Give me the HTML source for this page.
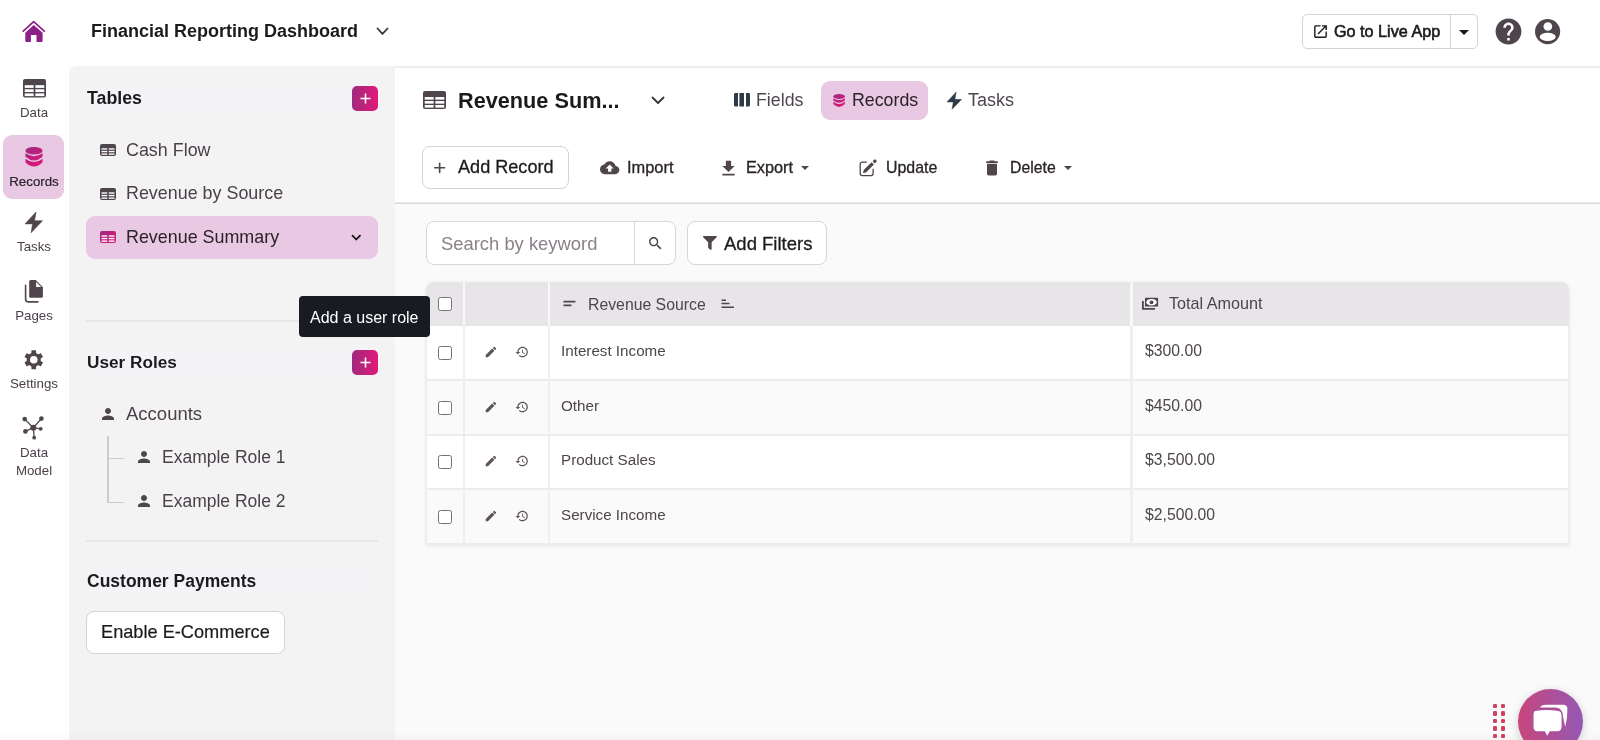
<!DOCTYPE html>
<html><head><meta charset="utf-8"><title>Financial Reporting Dashboard</title>
<style>
html,body{margin:0;padding:0;}
body{width:1600px;height:740px;position:relative;overflow:hidden;background:#fff;font-family:"Liberation Sans",sans-serif;-webkit-font-smoothing:antialiased;}
.t{position:absolute;white-space:nowrap;will-change:transform;}
.b{position:absolute;}
svg.b{overflow:visible;}
</style></head><body>
<div class="b" style="left:69px;top:66px;width:326px;height:674px;background:#f3f3f3;border-top-left-radius:8px;"></div>
<div class="b" style="left:395px;top:67px;width:1205px;height:136px;background:#ffffff;"></div>
<div class="b" style="left:395px;top:66px;width:1205px;height:2px;background:#ededed;"></div>
<div class="b" style="left:395px;top:202px;width:1205px;height:1px;background:#eceaec;"></div>
<div class="b" style="left:395px;top:203px;width:1205px;height:1px;background:#d9d5d9;"></div>
<div class="b" style="left:395px;top:204px;width:1205px;height:536px;background:#fafafa;"></div>
<svg class="b" style="left:16px;top:14px;" width="36" height="34" viewBox="0 0 36 34" ><path d="M7.2 17.2 L17.7 7.6 L28.2 17.2" fill="none" stroke="#8e1f88" stroke-width="1.7" stroke-linecap="round" stroke-linejoin="round"/><path d="M9.3 18.8 L17.7 11.1 L26.6 18.8 V26.7 Q26.6 27.9 25.4 27.9 H20.5 V21.3 Q20.5 20.9 20.1 20.9 H15.3 Q14.9 20.9 14.9 21.3 V27.9 H10.5 Q9.3 27.9 9.3 26.7 Z" fill="#8e1f88"/></svg>
<div class="t" style="left:91.00px;top:22px;font-size:18px;line-height:18px;color:#1d1a1d;font-weight:700;">Financial Reporting Dashboard</div>
<svg class="b" style="left:376px;top:27px;" width="13" height="9" viewBox="0 0 13 9" ><path d="M1.5 1.5 L6.5 6.8 L11.5 1.5" fill="none" stroke="#3a3439" stroke-width="1.8" stroke-linecap="round" stroke-linejoin="round"/></svg>
<div class="b" style="left:1302px;top:14px;width:176px;height:35px;box-sizing:border-box;border:1px solid #d6d3d6;border-radius:5px;background:#fff;"></div>
<div class="b" style="left:1450px;top:15px;width:1px;height:33px;background:#d6d3d6;"></div>
<svg class="b" style="left:1312px;top:22.8px;" width="17" height="17" viewBox="0 0 24 24" ><path fill="#1d1a1d" d="M19 19H5V5h7V3H5c-1.11 0-2 .9-2 2v14c0 1.1.89 2 2 2h14c1.1 0 2-.9 2-2v-7h-2zM14 3v2h3.59l-9.83 9.83 1.41 1.41L19 6.41V10h2V3z"/></svg>
<div class="t" style="left:1334.00px;top:23px;font-size:16.2px;line-height:16px;color:#1d1a1d;font-weight:400;-webkit-text-stroke:0.6px #1d1a1d;">Go to Live App</div>
<svg class="b" style="left:1459px;top:29.5px;" width="10" height="5" viewBox="0 0 10 5" ><path d="M0 0 H10 L5 5 Z" fill="#1d1a1d"/></svg>
<svg class="b" style="left:1493px;top:16px;" width="31" height="31" viewBox="0 0 24 24" ><path fill="#4f454d" d="M12 2C6.48 2 2 6.48 2 12s4.48 10 10 10 10-4.48 10-10S17.52 2 12 2m1 17h-2v-2h2zm2.07-7.75-.9.92C13.45 12.9 13 13.5 13 15h-2v-.5c0-1.1.45-2.1 1.17-2.83l1.24-1.26c.37-.36.59-.86.59-1.41 0-1.1-.9-2-2-2s-2 .9-2 2H8c0-2.21 1.79-4 4-4s4 1.79 4 4c0 .88-.36 1.68-.93 2.25"/></svg>
<svg class="b" style="left:1535px;top:19px;" width="25.2" height="25.2" viewBox="0 0 25.2 25.2" ><circle cx="12.6" cy="12.6" r="12.6" fill="#4f454d"/><circle cx="12.85" cy="7.5" r="4.35" fill="#fff"/><ellipse cx="12.7" cy="17.9" rx="8" ry="4.2" fill="#fff"/></svg>
<svg class="b" style="left:22.5px;top:79px;" width="23" height="18.5" viewBox="0 0 23 18.5" ><rect x="0" y="0" width="23" height="18.5" rx="2" fill="#4f454d"/><rect x="1.72" y="6.19" width="8.91" height="2.72" fill="#fff"/><rect x="12.36" y="6.19" width="8.91" height="2.72" fill="#fff"/><rect x="1.72" y="10.29" width="8.91" height="2.72" fill="#fff"/><rect x="12.36" y="10.29" width="8.91" height="2.72" fill="#fff"/><rect x="1.72" y="14.40" width="8.91" height="2.72" fill="#fff"/><rect x="12.36" y="14.40" width="8.91" height="2.72" fill="#fff"/></svg>
<div class="t" style="left:-66.30px;width:200px;text-align:center;top:106px;font-size:13.3px;line-height:13px;color:#4b404a;font-weight:400;">Data</div>
<div class="b" style="left:3px;top:135px;width:61px;height:63.5px;background:#e8c8e2;border-radius:9px;"></div>
<svg class="b" style="left:24.6px;top:146.6px;" width="18" height="19.7" viewBox="0 0 12.2 12.8" preserveAspectRatio="none"><defs><linearGradient id="gdb" gradientUnits="userSpaceOnUse" x1="0" y1="0" x2="8" y2="13"><stop offset="0" stop-color="#9a2a7f"/><stop offset="1" stop-color="#e0187a"/></linearGradient></defs><ellipse cx="6.1" cy="2.45" rx="5.8" ry="2.45" fill="url(#gdb)"/><path fill="url(#gdb)" d="M0.3 4.1 Q6.1 7.8 11.9 4.1 V6.3 Q6.1 11.1 0.3 6.3 Z M0.3 7.6 Q6.1 12.0 11.9 7.6 V9.9 Q6.1 15.5 0.3 9.9 Z"/></svg>
<div class="t" style="left:-66.40px;width:200px;text-align:center;top:175px;font-size:13.3px;line-height:13px;color:#2a2329;font-weight:400;-webkit-text-stroke:0.2px #2a2329;">Records</div>
<svg class="b" style="left:25.1px;top:212.3px;" width="17.5" height="20.7" viewBox="0 0 17.5 20.7" ><path fill="#4f454d" stroke="#4f454d" stroke-width="0.6" stroke-linejoin="round" d="M11.1 0 L0 11.9 L7.6 11.9 L6.1 20.7 L17.5 8.8 L9.5 8.75 Z"/></svg>
<div class="t" style="left:-66.20px;width:200px;text-align:center;top:240px;font-size:13.3px;line-height:13px;color:#4b404a;font-weight:400;">Tasks</div>
<svg class="b" style="left:20px;top:276px;" width="28" height="30" viewBox="0 0 28 30" ><path fill="#4f454d" d="M10.7 4 H15.6 L22.9 11.3 V20.3 Q22.9 21.8 21.4 21.8 H10.7 Q9.2 21.8 9.2 20.3 V5.5 Q9.2 4 10.7 4 Z"/><path fill="#fff" d="M16.1 5.9 V11 H21.2 Z"/><path d="M5.6 9.3 V22.9 Q5.6 25.9 8.6 25.9 H17.9" fill="none" stroke="#4f454d" stroke-width="1.6" stroke-linecap="round"/></svg>
<div class="t" style="left:-66.50px;width:200px;text-align:center;top:309px;font-size:13.3px;line-height:13px;color:#4b404a;font-weight:400;">Pages</div>
<svg class="b" style="left:24px;top:349.5px;" width="19.5" height="19.5" viewBox="0 0 20 20" ><rect x="7.6" y="0.3" width="4.8" height="5" rx="0.5" transform="rotate(0 10 10)" fill="#4f454d"/><rect x="7.6" y="0.3" width="4.8" height="5" rx="0.5" transform="rotate(60 10 10)" fill="#4f454d"/><rect x="7.6" y="0.3" width="4.8" height="5" rx="0.5" transform="rotate(120 10 10)" fill="#4f454d"/><rect x="7.6" y="0.3" width="4.8" height="5" rx="0.5" transform="rotate(180 10 10)" fill="#4f454d"/><rect x="7.6" y="0.3" width="4.8" height="5" rx="0.5" transform="rotate(240 10 10)" fill="#4f454d"/><rect x="7.6" y="0.3" width="4.8" height="5" rx="0.5" transform="rotate(300 10 10)" fill="#4f454d"/><circle cx="10" cy="10" r="7.3" fill="#4f454d"/><circle cx="10" cy="10" r="3.9" fill="#fff"/></svg>
<div class="t" style="left:-66.40px;width:200px;text-align:center;top:377px;font-size:13.3px;line-height:13px;color:#4b404a;font-weight:400;">Settings</div>
<svg class="b" style="left:22px;top:416px;" width="22" height="24" viewBox="0 0 22 24" ><g stroke="#4f454d" stroke-width="1.3"><line x1="11.3" y1="11.7" x2="2.7" y2="3.1"/><line x1="11.3" y1="11.7" x2="19.4" y2="2.6"/><line x1="11.3" y1="11.7" x2="3.4" y2="15.4"/><line x1="11.3" y1="11.7" x2="18.7" y2="12.8"/><line x1="11.3" y1="11.7" x2="12.2" y2="21.7"/></g><g fill="#4f454d"><circle cx="11.3" cy="11.7" r="3"/><circle cx="2.7" cy="3.1" r="2.3"/><circle cx="19.4" cy="2.6" r="2.3"/><circle cx="3.4" cy="15.4" r="2.3"/><circle cx="18.7" cy="12.8" r="1.9"/><circle cx="12.2" cy="21.7" r="1.9"/></g></svg>
<div class="t" style="left:-66.40px;width:200px;text-align:center;top:446px;font-size:13.3px;line-height:13px;color:#4b404a;font-weight:400;">Data</div>
<div class="t" style="left:-66.40px;width:200px;text-align:center;top:464px;font-size:13.3px;line-height:13px;color:#4b404a;font-weight:400;">Model</div>
<div class="b" style="left:86px;top:84px;width:292px;height:26.5px;background:#f4f4f6;"></div>
<div class="t" style="left:87.00px;top:89px;font-size:17.8px;line-height:18px;color:#1d1a1d;font-weight:700;">Tables</div>
<div class="b" style="left:352px;top:85.5px;width:26px;height:25px;background:linear-gradient(90deg,#a02b7d,#e2187a);border-radius:5px;"></div>
<svg class="b" style="left:358.5px;top:91.5px;" width="13" height="13" viewBox="0 0 13 13" ><path d="M6.5 1.5 V11.5 M1.5 6.5 H11.5" stroke="#fff" stroke-width="1.6"/></svg>
<svg class="b" style="left:100px;top:144.2px;" width="16" height="12" viewBox="0 0 16 12" ><rect x="0" y="0" width="16" height="12" rx="2" fill="#4f454d"/><rect x="1.50" y="4.32" width="5.75" height="1.36" fill="#fff"/><rect x="8.75" y="4.32" width="5.75" height="1.36" fill="#fff"/><rect x="1.50" y="6.88" width="5.75" height="1.36" fill="#fff"/><rect x="8.75" y="6.88" width="5.75" height="1.36" fill="#fff"/><rect x="1.50" y="9.44" width="5.75" height="1.36" fill="#fff"/><rect x="8.75" y="9.44" width="5.75" height="1.36" fill="#fff"/></svg>
<div class="t" style="left:126.00px;top:141px;font-size:17.9px;line-height:18px;color:#4b404a;font-weight:400;">Cash Flow</div>
<svg class="b" style="left:100px;top:187.5px;" width="16" height="12" viewBox="0 0 16 12" ><rect x="0" y="0" width="16" height="12" rx="2" fill="#4f454d"/><rect x="1.50" y="4.32" width="5.75" height="1.36" fill="#fff"/><rect x="8.75" y="4.32" width="5.75" height="1.36" fill="#fff"/><rect x="1.50" y="6.88" width="5.75" height="1.36" fill="#fff"/><rect x="8.75" y="6.88" width="5.75" height="1.36" fill="#fff"/><rect x="1.50" y="9.44" width="5.75" height="1.36" fill="#fff"/><rect x="8.75" y="9.44" width="5.75" height="1.36" fill="#fff"/></svg>
<div class="t" style="left:126.00px;top:184px;font-size:17.9px;line-height:18px;color:#4b404a;font-weight:400;">Revenue by Source</div>
<div class="b" style="left:86px;top:216px;width:292px;height:43.2px;background:#e8c8e2;border-radius:9px;"></div>
<svg class="b" style="left:100px;top:231px;" width="16" height="12" viewBox="0 0 16 12" ><defs><linearGradient id="gtb" x1="0" y1="0" x2="1" y2="1"><stop offset="0" stop-color="#9a2a7f"/><stop offset="1" stop-color="#e0187a"/></linearGradient></defs><rect x="0" y="0" width="16" height="12" rx="2" fill="url(#gtb)"/><rect x="1.50" y="4.32" width="5.75" height="1.36" fill="#fff"/><rect x="8.75" y="4.32" width="5.75" height="1.36" fill="#fff"/><rect x="1.50" y="6.88" width="5.75" height="1.36" fill="#fff"/><rect x="8.75" y="6.88" width="5.75" height="1.36" fill="#fff"/><rect x="1.50" y="9.44" width="5.75" height="1.36" fill="#fff"/><rect x="8.75" y="9.44" width="5.75" height="1.36" fill="#fff"/></svg>
<div class="t" style="left:126.00px;top:228px;font-size:17.9px;line-height:18px;color:#2a2329;font-weight:400;">Revenue Summary</div>
<svg class="b" style="left:351px;top:233.5px;" width="10.5" height="7.5" viewBox="0 0 10.5 7.5" ><path d="M1.5 1.6 L5.25 5.5 L9 1.6" fill="none" stroke="#151215" stroke-width="1.8" stroke-linecap="round" stroke-linejoin="round"/></svg>
<div class="b" style="left:86px;top:320px;width:292px;height:1.5px;background:#e6e5e7;"></div>
<div class="b" style="left:86px;top:348px;width:292px;height:26.5px;background:#f4f4f6;"></div>
<div class="t" style="left:87.00px;top:354px;font-size:17.2px;line-height:17px;color:#1d1a1d;font-weight:700;">User Roles</div>
<div class="b" style="left:352px;top:349.5px;width:26px;height:25px;background:linear-gradient(90deg,#a02b7d,#e2187a);border-radius:5px;"></div>
<svg class="b" style="left:358.5px;top:355.5px;" width="13" height="13" viewBox="0 0 13 13" ><path d="M6.5 1.5 V11.5 M1.5 6.5 H11.5" stroke="#fff" stroke-width="1.6"/></svg>
<svg class="b" style="left:99px;top:404.5px;" width="18" height="18" viewBox="0 0 24 24" ><path fill="#4f454d" d="M12 12c2.21 0 4-1.79 4-4s-1.79-4-4-4-4 1.79-4 4 1.79 4 4 4m0 2c-2.67 0-8 1.34-8 4v2h16v-2c0-2.66-5.33-4-8-4"/></svg>
<div class="t" style="left:126.00px;top:405px;font-size:18.5px;line-height:18px;color:#4b404a;font-weight:400;">Accounts</div>
<div class="b" style="left:107.2px;top:435.5px;width:1.5px;height:67.5px;background:#d0cacf;"></div>
<div class="b" style="left:107.2px;top:457.8px;width:17px;height:1.5px;background:#d0cacf;"></div>
<div class="b" style="left:107.2px;top:501.5px;width:17px;height:1.5px;background:#d0cacf;"></div>
<svg class="b" style="left:135px;top:448px;" width="18" height="18" viewBox="0 0 24 24" ><path fill="#4f454d" d="M12 12c2.21 0 4-1.79 4-4s-1.79-4-4-4-4 1.79-4 4 1.79 4 4 4m0 2c-2.67 0-8 1.34-8 4v2h16v-2c0-2.66-5.33-4-8-4"/></svg>
<div class="t" style="left:162.00px;top:448px;font-size:17.5px;line-height:18px;color:#4b404a;font-weight:400;">Example Role 1</div>
<svg class="b" style="left:135px;top:491.8px;" width="18" height="18" viewBox="0 0 24 24" ><path fill="#4f454d" d="M12 12c2.21 0 4-1.79 4-4s-1.79-4-4-4-4 1.79-4 4 1.79 4 4 4m0 2c-2.67 0-8 1.34-8 4v2h16v-2c0-2.66-5.33-4-8-4"/></svg>
<div class="t" style="left:162.00px;top:492px;font-size:17.5px;line-height:18px;color:#4b404a;font-weight:400;">Example Role 2</div>
<div class="b" style="left:86px;top:540px;width:292px;height:2px;background:#e8e7e9;"></div>
<div class="b" style="left:86px;top:567.5px;width:292px;height:25px;background:#f4f4f6;"></div>
<div class="t" style="left:87.00px;top:572px;font-size:17.5px;line-height:18px;color:#1d1a1d;font-weight:700;">Customer Payments</div>
<div class="b" style="left:86px;top:611px;width:199px;height:43px;box-sizing:border-box;border:1px solid #d6d3d6;border-radius:8px;background:#fff;"></div>
<div class="t" style="left:101.00px;top:623px;font-size:18.2px;line-height:18px;color:#1d1a1d;font-weight:400;-webkit-text-stroke:0.2px #1d1a1d;">Enable E-Commerce</div>
<svg class="b" style="left:423px;top:91px;" width="23" height="18" viewBox="0 0 23 18" ><rect x="0" y="0" width="23" height="18" rx="2" fill="#4f454d"/><rect x="1.72" y="6.06" width="8.91" height="2.60" fill="#fff"/><rect x="12.36" y="6.06" width="8.91" height="2.60" fill="#fff"/><rect x="1.72" y="10.04" width="8.91" height="2.60" fill="#fff"/><rect x="12.36" y="10.04" width="8.91" height="2.60" fill="#fff"/><rect x="1.72" y="14.02" width="8.91" height="2.60" fill="#fff"/><rect x="12.36" y="14.02" width="8.91" height="2.60" fill="#fff"/></svg>
<div class="t" style="left:457.50px;top:90px;font-size:21.7px;line-height:22px;color:#1d1a1d;font-weight:700;">Revenue Sum...</div>
<svg class="b" style="left:651px;top:95.5px;" width="14" height="9" viewBox="0 0 14 9" ><path d="M1.5 1.5 L7 7 L12.5 1.5" fill="none" stroke="#3a3439" stroke-width="1.8" stroke-linecap="round" stroke-linejoin="round"/></svg>
<svg class="b" style="left:733.9px;top:93.2px;" width="16" height="13.6" viewBox="0 0 16 13.6" ><path fill="#2e3a46" d="M1.5 0 H4 V13.6 H1.5 Q0 13.6 0 12.1 V1.5 Q0 0 1.5 0 Z M5.4 0 H10 V13.6 H5.4 Z M12 0 H14.5 Q16 0 16 1.5 V12.1 Q16 13.6 14.5 13.6 H12 Z"/></svg>
<div class="t" style="left:755.50px;top:91px;font-size:17.8px;line-height:18px;color:#4d4650;font-weight:400;">Fields</div>
<div class="b" style="left:821px;top:81px;width:107px;height:38.6px;background:#e8c8e2;border-radius:9px;"></div>
<svg class="b" style="left:833px;top:93.9px;" width="12.2" height="13" viewBox="0 0 12.2 12.8" preserveAspectRatio="none"><defs><linearGradient id="gdb2" gradientUnits="userSpaceOnUse" x1="0" y1="0" x2="8" y2="13"><stop offset="0" stop-color="#9a2a7f"/><stop offset="1" stop-color="#e0187a"/></linearGradient></defs><ellipse cx="6.1" cy="2.45" rx="5.8" ry="2.45" fill="url(#gdb2)"/><path fill="url(#gdb2)" d="M0.3 4.1 Q6.1 7.8 11.9 4.1 V6.3 Q6.1 11.1 0.3 6.3 Z M0.3 7.6 Q6.1 12.0 11.9 7.6 V9.9 Q6.1 15.5 0.3 9.9 Z"/></svg>
<div class="t" style="left:852.00px;top:91px;font-size:17.8px;line-height:18px;color:#2a2329;font-weight:400;">Records</div>
<svg class="b" style="left:946.7px;top:91.5px;" width="14.5" height="17.4" viewBox="0 0 17.5 20.7" ><path fill="#2e3a46" stroke="#2e3a46" stroke-width="0.6" stroke-linejoin="round" d="M11.1 0 L0 11.9 L7.6 11.9 L6.1 20.7 L17.5 8.8 L9.5 8.75 Z"/></svg>
<div class="t" style="left:968.00px;top:91px;font-size:18px;line-height:18px;color:#4d4650;font-weight:400;">Tasks</div>
<div class="b" style="left:422px;top:146px;width:147px;height:43px;box-sizing:border-box;border:1px solid #d6d3d6;border-radius:8px;background:#fff;"></div>
<svg class="b" style="left:434px;top:161.5px;" width="11.5" height="11.5" viewBox="0 0 12 12" ><path d="M5.9 1.3 V10.9 M0.8 6 H11" stroke="#4f454d" stroke-width="1.7" stroke-linecap="round"/></svg>
<div class="t" style="left:458.00px;top:158px;font-size:18.1px;line-height:18px;color:#1d1a1d;font-weight:400;-webkit-text-stroke:0.3px #1d1a1d;">Add Record</div>
<svg class="b" style="left:599.7px;top:157.9px;" width="19.4" height="19.4" viewBox="0 0 24 24" ><path fill="#4f454d" d="M19.35 10.04C18.67 6.59 15.64 4 12 4 9.11 4 6.6 5.64 5.35 8.04 2.34 8.36 0 10.91 0 14c0 3.31 2.69 6 6 6h13c2.76 0 5-2.24 5-5 0-2.64-2.05-4.78-4.65-4.96M14 13v4h-4v-4H7l5-5 5 5z"/></svg>
<div class="t" style="left:627.00px;top:159px;font-size:16.4px;line-height:16px;color:#2a2329;font-weight:400;-webkit-text-stroke:0.3px #2a2329;">Import</div>
<svg class="b" style="left:717.5px;top:157.5px;" width="21" height="21" viewBox="0 0 24 24" ><path fill="#4f454d" d="M19 9h-4V3H9v6H5l7 7zM5 18v2h14v-2z"/></svg>
<div class="t" style="left:745.50px;top:159px;font-size:16.3px;line-height:16px;color:#2a2329;font-weight:400;-webkit-text-stroke:0.3px #2a2329;">Export</div>
<svg class="b" style="left:801px;top:166px;" width="8" height="4" viewBox="0 0 8 4" ><path d="M0 0 H8 L4 4 Z" fill="#4f454d"/></svg>
<svg class="b" style="left:858px;top:158px;" width="20" height="20" viewBox="0 0 20 20" ><path d="M8.9 4.1 H4.2 Q2.2 4.1 2.2 6.1 V15.6 Q2.2 17.6 4.2 17.6 H13.1 Q15.1 17.6 15.1 15.6 V10.8" fill="none" stroke="#4f454d" stroke-width="1.3"/><path fill="#4f454d" d="M5 15 L5.7 12.1 L13.6 4.2 L15.9 6.5 L8 14.4 Z M14.6 3.2 L16.1 1.7 Q17 0.9 17.8 1.7 L18.3 2.2 Q19.1 3 18.3 3.9 L16.9 5.4 Z"/></svg>
<div class="t" style="left:886.00px;top:160px;font-size:15.9px;line-height:16px;color:#2a2329;font-weight:400;-webkit-text-stroke:0.3px #2a2329;">Update</div>
<svg class="b" style="left:981.8px;top:157.8px;" width="20" height="20" viewBox="0 0 24 24" ><path fill="#4f454d" d="M6 19c0 1.1.9 2 2 2h8c1.1 0 2-.9 2-2V7H6zM19 4h-3.5l-1-1h-5l-1 1H5v2h14z"/></svg>
<div class="t" style="left:1009.50px;top:160px;font-size:15.8px;line-height:16px;color:#2a2329;font-weight:400;-webkit-text-stroke:0.3px #2a2329;">Delete</div>
<svg class="b" style="left:1063.8px;top:166px;" width="8" height="4" viewBox="0 0 8 4" ><path d="M0 0 H8 L4 4 Z" fill="#4f454d"/></svg>
<div class="b" style="left:426px;top:221px;width:250px;height:43.5px;box-sizing:border-box;border:1px solid #d8d6dc;border-radius:8px;background:#fff;"></div>
<div class="b" style="left:634px;top:222px;width:1.2px;height:41.5px;background:#dcdadd;"></div>
<div class="t" style="left:440.50px;top:235px;font-size:18.4px;line-height:18px;color:#8a8189;font-weight:400;">Search by keyword</div>
<svg class="b" style="left:646.6px;top:234.6px;" width="16.9" height="16.9" viewBox="0 0 24 24" ><path fill="#4f454d" d="M15.5 14h-.79l-.28-.27C15.41 12.59 16 11.11 16 9.5 16 5.91 13.09 3 9.5 3S3 5.91 3 9.5 5.91 16 9.5 16c1.61 0 3.09-.59 4.23-1.57l.27.28v.79l5 4.99L20.49 19zm-6 0C7.01 14 5 11.99 5 9.5S7.01 5 9.5 5 14 7.01 14 9.5 11.99 14 9.5 14"/></svg>
<div class="b" style="left:687px;top:221px;width:140px;height:43.5px;box-sizing:border-box;border:1px solid #d8d6dc;border-radius:8px;background:#fff;"></div>
<svg class="b" style="left:703px;top:236.3px;" width="13.8" height="14" viewBox="0 0 512 512" ><path fill="#4f454d" d="M487.976 0H24.028C2.71 0-8.047 25.866 7.058 40.971L192 225.941V432c0 7.831 3.821 15.170 10.237 19.662l80 55.98C298.020 518.690 320 507.493 320 487.980V225.941l184.947-184.970C520.021 25.896 509.338 0 487.976 0z"/></svg>
<div class="t" style="left:723.50px;top:235px;font-size:18.5px;line-height:18px;color:#1d1a1d;font-weight:400;-webkit-text-stroke:0.3px #1d1a1d;">Add Filters</div>
<div class="b" style="left:426px;top:282px;width:1142.6px;height:263px;background:#fff;border-radius:8px 8px 0 0;box-shadow:0 1px 4px rgba(0,0,0,0.09);"></div>
<div class="b" style="left:426px;top:282px;width:1142.6px;height:44px;background:#e7e5e8;border-radius:8px 8px 0 0;"></div>
<div class="b" style="left:426px;top:326px;width:1142.6px;height:54px;background:#ffffff;"></div>
<div class="b" style="left:426px;top:380px;width:1142.6px;height:55px;background:#fafafa;"></div>
<div class="b" style="left:426px;top:435px;width:1142.6px;height:54px;background:#ffffff;"></div>
<div class="b" style="left:426px;top:489px;width:1142.6px;height:55px;background:#fafafa;"></div>
<div class="b" style="left:426px;top:379px;width:1142.6px;height:2px;background:#ececec;"></div>
<div class="b" style="left:426px;top:434px;width:1142.6px;height:2px;background:#ececec;"></div>
<div class="b" style="left:426px;top:488px;width:1142.6px;height:2px;background:#ececec;"></div>
<div class="b" style="left:426px;top:543px;width:1142.6px;height:2px;background:#ececec;"></div>
<div class="b" style="left:426px;top:326px;width:1px;height:219px;background:#ececec;"></div>
<div class="b" style="left:1567.6px;top:326px;width:1px;height:219px;background:#ececec;"></div>
<div class="b" style="left:462.8px;top:282px;width:2.4px;height:44px;background:#f8f8f8;"></div>
<div class="b" style="left:462.8px;top:326px;width:2.4px;height:218px;background:#efefef;"></div>
<div class="b" style="left:547.8px;top:282px;width:2.4px;height:44px;background:#f8f8f8;"></div>
<div class="b" style="left:547.8px;top:326px;width:2.4px;height:218px;background:#efefef;"></div>
<div class="b" style="left:1130.3px;top:282px;width:2.4px;height:44px;background:#f8f8f8;"></div>
<div class="b" style="left:1130.3px;top:326px;width:2.4px;height:218px;background:#efefef;"></div>
<div class="b" style="left:437.5px;top:297px;width:14px;height:14px;box-sizing:border-box;border:1.3px solid #777277;border-radius:2.5px;background:#fff;"></div>
<svg class="b" style="left:561px;top:298px;" width="16" height="12" viewBox="0 0 16 12" ><path d="M2.5 3.6 H14.5 M2.5 7.4 H10.5" stroke="#4f454d" stroke-width="1.6"/></svg>
<div class="t" style="left:587.50px;top:297px;font-size:15.8px;line-height:16px;color:#4d464c;font-weight:400;">Revenue Source</div>
<svg class="b" style="left:720px;top:298px;" width="15" height="12" viewBox="0 0 15 12" ><path d="M1.5 2.2 H6 M1.5 5.6 H9.5 M1.5 9.2 H14" stroke="#4f454d" stroke-width="1.5"/></svg>
<svg class="b" style="left:1138px;top:292px;" width="24" height="24" viewBox="0 0 24 24" ><rect x="7" y="5.8" width="13.1" height="8.8" rx="0.6" fill="#4f454d"/><ellipse cx="13.5" cy="10.2" rx="5.2" ry="3.3" fill="#fff"/><circle cx="13.5" cy="10.3" r="1.9" fill="#4f454d"/><path d="M4.9 8.9 V16.9 H17" fill="none" stroke="#4f454d" stroke-width="1.8"/></svg>
<div class="t" style="left:1169.00px;top:295px;font-size:16.2px;line-height:16px;color:#4d464c;font-weight:400;">Total Amount</div>
<div class="b" style="left:438px;top:346px;width:14px;height:14px;box-sizing:border-box;border:1.3px solid #777277;border-radius:2.5px;background:#fff;"></div>
<svg class="b" style="left:484px;top:345px;" width="14" height="14" viewBox="0 0 24 24" ><path fill="#5b5359" d="M3 17.25V21h3.75L17.81 9.94l-3.75-3.75zM20.71 7.04c.39-.39.39-1.02 0-1.41l-2.34-2.34a.9959.9959 0 0 0-1.41 0l-1.83 1.83 3.75 3.75z"/></svg>
<svg class="b" style="left:515px;top:345px;" width="14" height="14" viewBox="0 0 24 24" ><path fill="#5b5359" d="M13 3c-4.97 0-9 4.03-9 9H1l3.89 3.89.07.14L9 12H6c0-3.87 3.130-7 7-7s7 3.13 7 7-3.13 7-7 7c-1.93 0-3.68-.79-4.94-2.06l-1.42 1.42C8.27 19.99 10.51 21 13 21c4.97 0 9-4.03 9-9s-4.03-9-9-9m-1 5v5l4.28 2.54.72-1.21-3.5-2.08V8z"/></svg>
<div class="t" style="left:561.30px;top:343px;font-size:15.2px;line-height:15px;color:#4d464c;font-weight:400;">Interest Income</div>
<div class="t" style="left:1144.50px;top:343px;font-size:15.75px;line-height:16px;color:#4d464c;font-weight:400;">$300.00</div>
<div class="b" style="left:438px;top:400.5px;width:14px;height:14px;box-sizing:border-box;border:1.3px solid #777277;border-radius:2.5px;background:#fff;"></div>
<svg class="b" style="left:484px;top:399.5px;" width="14" height="14" viewBox="0 0 24 24" ><path fill="#5b5359" d="M3 17.25V21h3.75L17.81 9.94l-3.75-3.75zM20.71 7.04c.39-.39.39-1.02 0-1.41l-2.34-2.34a.9959.9959 0 0 0-1.41 0l-1.83 1.83 3.75 3.75z"/></svg>
<svg class="b" style="left:515px;top:399.5px;" width="14" height="14" viewBox="0 0 24 24" ><path fill="#5b5359" d="M13 3c-4.97 0-9 4.03-9 9H1l3.89 3.89.07.14L9 12H6c0-3.87 3.130-7 7-7s7 3.13 7 7-3.13 7-7 7c-1.93 0-3.68-.79-4.94-2.06l-1.42 1.42C8.27 19.99 10.51 21 13 21c4.97 0 9-4.03 9-9s-4.03-9-9-9m-1 5v5l4.28 2.54.72-1.21-3.5-2.08V8z"/></svg>
<div class="t" style="left:561.30px;top:398px;font-size:15.2px;line-height:15px;color:#4d464c;font-weight:400;">Other</div>
<div class="t" style="left:1144.50px;top:398px;font-size:15.75px;line-height:16px;color:#4d464c;font-weight:400;">$450.00</div>
<div class="b" style="left:438px;top:455px;width:14px;height:14px;box-sizing:border-box;border:1.3px solid #777277;border-radius:2.5px;background:#fff;"></div>
<svg class="b" style="left:484px;top:454px;" width="14" height="14" viewBox="0 0 24 24" ><path fill="#5b5359" d="M3 17.25V21h3.75L17.81 9.94l-3.75-3.75zM20.71 7.04c.39-.39.39-1.02 0-1.41l-2.34-2.34a.9959.9959 0 0 0-1.41 0l-1.83 1.83 3.75 3.75z"/></svg>
<svg class="b" style="left:515px;top:454px;" width="14" height="14" viewBox="0 0 24 24" ><path fill="#5b5359" d="M13 3c-4.97 0-9 4.03-9 9H1l3.89 3.89.07.14L9 12H6c0-3.87 3.130-7 7-7s7 3.13 7 7-3.13 7-7 7c-1.93 0-3.68-.79-4.94-2.06l-1.42 1.42C8.27 19.99 10.51 21 13 21c4.97 0 9-4.03 9-9s-4.03-9-9-9m-1 5v5l4.28 2.54.72-1.21-3.5-2.08V8z"/></svg>
<div class="t" style="left:561.30px;top:452px;font-size:15.2px;line-height:15px;color:#4d464c;font-weight:400;">Product Sales</div>
<div class="t" style="left:1144.50px;top:452px;font-size:15.75px;line-height:16px;color:#4d464c;font-weight:400;">$3,500.00</div>
<div class="b" style="left:438px;top:509.5px;width:14px;height:14px;box-sizing:border-box;border:1.3px solid #777277;border-radius:2.5px;background:#fff;"></div>
<svg class="b" style="left:484px;top:508.5px;" width="14" height="14" viewBox="0 0 24 24" ><path fill="#5b5359" d="M3 17.25V21h3.75L17.81 9.94l-3.75-3.75zM20.71 7.04c.39-.39.39-1.02 0-1.41l-2.34-2.34a.9959.9959 0 0 0-1.41 0l-1.83 1.83 3.75 3.75z"/></svg>
<svg class="b" style="left:515px;top:508.5px;" width="14" height="14" viewBox="0 0 24 24" ><path fill="#5b5359" d="M13 3c-4.97 0-9 4.03-9 9H1l3.89 3.89.07.14L9 12H6c0-3.87 3.130-7 7-7s7 3.13 7 7-3.13 7-7 7c-1.93 0-3.68-.79-4.94-2.06l-1.42 1.42C8.27 19.99 10.51 21 13 21c4.97 0 9-4.03 9-9s-4.03-9-9-9m-1 5v5l4.28 2.54.72-1.21-3.5-2.08V8z"/></svg>
<div class="t" style="left:561.30px;top:507px;font-size:15.2px;line-height:15px;color:#4d464c;font-weight:400;">Service Income</div>
<div class="t" style="left:1144.50px;top:507px;font-size:15.75px;line-height:16px;color:#4d464c;font-weight:400;">$2,500.00</div>
<div class="b" style="left:299px;top:296.2px;width:131px;height:40.6px;background:#181b21;border-radius:4px;"></div>
<div class="t" style="left:310.00px;top:310px;font-size:16px;line-height:16px;color:#ffffff;font-weight:400;">Add a user role</div>
<div class="b" style="left:0px;top:732px;width:1600px;height:8px;background:linear-gradient(rgba(0,0,0,0),rgba(0,0,0,0.025));"></div>
<div class="b" style="left:1492.8px;top:703.8px;width:4.5px;height:4.5px;background:#d3405f;border-radius:1.2px;"></div>
<div class="b" style="left:1500.8px;top:703.8px;width:4.5px;height:4.5px;background:#d3405f;border-radius:1.2px;"></div>
<div class="b" style="left:1492.8px;top:711.3px;width:4.5px;height:4.5px;background:#d3405f;border-radius:1.2px;"></div>
<div class="b" style="left:1500.8px;top:711.3px;width:4.5px;height:4.5px;background:#d3405f;border-radius:1.2px;"></div>
<div class="b" style="left:1492.8px;top:718.8px;width:4.5px;height:4.5px;background:#d3405f;border-radius:1.2px;"></div>
<div class="b" style="left:1500.8px;top:718.8px;width:4.5px;height:4.5px;background:#d3405f;border-radius:1.2px;"></div>
<div class="b" style="left:1492.8px;top:726.3px;width:4.5px;height:4.5px;background:#d3405f;border-radius:1.2px;"></div>
<div class="b" style="left:1500.8px;top:726.3px;width:4.5px;height:4.5px;background:#d3405f;border-radius:1.2px;"></div>
<div class="b" style="left:1492.8px;top:733.8px;width:4.5px;height:4.5px;background:#d3405f;border-radius:1.2px;"></div>
<div class="b" style="left:1500.8px;top:733.8px;width:4.5px;height:4.5px;background:#d3405f;border-radius:1.2px;"></div>
<div class="b" style="left:1517.5px;top:688.5px;width:65px;height:65px;background:linear-gradient(90deg,#c8467a,#9558b5);border-radius:50%;box-shadow:0 2px 8px rgba(0,0,0,0.18);"></div>
<svg class="b" style="left:1532px;top:704px;" width="37" height="34" viewBox="0 0 37 34" ><path d="M8 3.5 Q9.5 0.8 14 0.7 H31 Q35.3 0.9 35.4 4.5 Q35.6 14 33.2 23 L30 8 Q28.5 4 24 3.6 Z" fill="#fff"/><path d="M3 6.3 Q15 4.4 26.5 6.3 Q30.2 7 30.2 12 V22.5 Q30.2 27.6 25.5 28 H18.2 L15.3 33 L12.4 28 H5 Q0.9 27.6 0.9 23 V11 Q0.9 6.8 3 6.3 Z" fill="#fff" stroke="#ad4f9a" stroke-width="1.3"/></svg>
</body></html>
